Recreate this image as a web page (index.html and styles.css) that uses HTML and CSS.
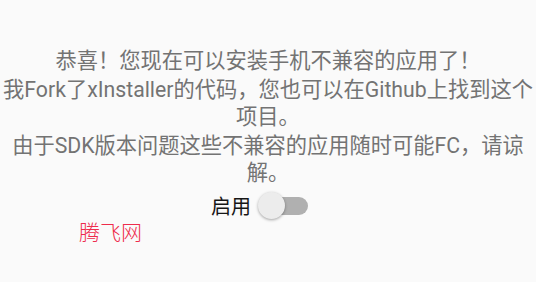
FILE: index.html
```html
<!DOCTYPE html>
<html lang="zh-CN">
<head>
<meta charset="utf-8">
<title>xInstaller</title>
<link rel="stylesheet" href="styles.css">
</head>
<body>
<main class="main">
  <p class="msg">恭喜！您现在可以安装手机不兼容的应用了！</p>
  <p class="msg">我Fork了xInstaller的代码，您也可以在Github上找到这个项目。</p>
  <p class="msg">由于SDK版本问题这些不兼容的应用随时可能FC，请谅解。</p>
  <label class="toggle-row">
    <span class="toggle-label">启用</span>
    <span class="switch">
      <span class="track"></span>
      <span class="thumb"></span>
    </span>
  </label>
</main>
<div class="watermark">腾飞网</div>
</body>
</html>
```

FILE: styles.css
```css
html, body {
  margin: 0;
  padding: 0;
  background: #fafafa;
}
body {
  width: 536px;
  height: 282px;
  overflow: hidden;
  position: relative;
  font-family: Roboto, "Noto Sans CJK SC", sans-serif;
}
.main {
  display: flex;
  flex-direction: column;
  align-items: center;
  padding-top: 47px;
}
.msg {
  margin: 0 0 2px 0;
  width: 100%;
  text-align: center;
  font-size: 21.25px;
  line-height: 27px;
  color: #737373;
}
.toggle-row {
  display: flex;
  align-items: center;
  gap: 6px;
  margin-top: 1px;
  height: 32px;
}
.toggle-label {
  font-size: 20px;
  color: #161616;
}
.switch {
  position: relative;
  width: 51px;
  height: 32px;
  margin-right: 17px;
}
.track {
  position: absolute;
  left: 8px;
  right: 0;
  top: 8px;
  height: 18px;
  border-radius: 9px;
  background: #b0b0b0;
}
.thumb {
  position: absolute;
  left: 1px;
  top: 3px;
  width: 27px;
  height: 27px;
  border-radius: 50%;
  background: #ececec;
  box-shadow: 0 1px 3px rgba(0,0,0,0.35);
}
.watermark {
  position: absolute;
  left: 79px;
  top: 217px;
  font-family: "Noto Sans CJK SC", sans-serif;
  font-weight: 300;
  font-size: 21px;
  line-height: 28px;
  color: #ee2c4c;
}
```
